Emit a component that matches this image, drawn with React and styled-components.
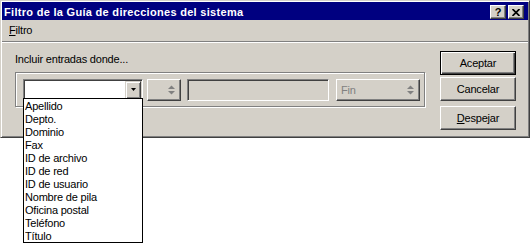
import React from "react";
import styled, { createGlobalStyle } from "styled-components";

const GlobalStyle = createGlobalStyle`
  html, body {
    margin: 0;
    padding: 0;
    background: #fff;
  }
  body {
    font-family: "Liberation Sans", Arial, sans-serif;
    font-size: 11px;
    letter-spacing: -0.2px;
    color: #000;
  }
  #root {
    min-height: 244px;
  }
`;

const FACE = "#d4d0c8";

const Window = styled.div`
  width: 530px;
  height: 138px;
  box-sizing: border-box;
  background: ${FACE};
  border-top: 1px solid ${FACE};
  border-left: 1px solid ${FACE};
  border-right: 1px solid #404040;
  border-bottom: 1px solid #404040;
  box-shadow: inset 1px 1px #fff, inset -1px -1px #808080;
  padding: 1px;
  display: flex;
  flex-direction: column;
`;

const TitleBar = styled.div`
  height: 18px;
  background: #000080;
  display: flex;
  align-items: center;
  padding: 0 4px 0 2px;
`;

const TitleText = styled.div`
  flex: 1;
  color: #fff;
  font-weight: bold;
  letter-spacing: 0.3px;
  line-height: 18px;
  padding-top: 2px;
  white-space: nowrap;
`;

const raised = `
  border-top: 1px solid #fff;
  border-left: 1px solid #fff;
  border-right: 1px solid #404040;
  border-bottom: 1px solid #404040;
  box-shadow: inset -1px -1px #808080;
  background: ${FACE};
`;

const sunken = `
  border-top: 1px solid #808080;
  border-left: 1px solid #808080;
  border-right: 1px solid #fff;
  border-bottom: 1px solid #fff;
  box-shadow: inset 1px 1px #404040, inset -1px -1px ${FACE};
`;

const CaptionButton = styled.div`
  ${raised}
  box-sizing: border-box;
  width: 16px;
  height: 14px;
  margin-top: 2px;
  margin-left: ${(p) => (p.$first ? 0 : 2)}px;
  display: flex;
  align-items: center;
  justify-content: center;
  font-weight: bold;
  font-size: 11px;
  line-height: 12px;
  letter-spacing: 0;
`;

const MenuBar = styled.div`
  height: 21px;
  line-height: 21px;
  padding-left: 7px;
`;

const Separator = styled.div`
  border-top: 1px solid #808080;
  border-bottom: 1px solid #fff;
`;

const Content = styled.div`
  display: flex;
  padding: 8px 0 0 13px;
`;

const LeftPanel = styled.div`
  width: 411px;
  display: flex;
  flex-direction: column;
`;

const Label = styled.div`
  margin-top: 2px;
  line-height: 13px;
`;

const GroupBox = styled.div`
  margin-top: 6px;
  width: 410px;
  height: 35px;
  box-sizing: border-box;
  border: 1px solid #808080;
  box-shadow: inset 1px 1px #fff, 1px 1px #fff;
  padding: 6px 0 0 7px;
  display: flex;
  align-items: flex-start;
`;

const Combo = styled.div`
  position: relative;
  ${sunken}
  box-sizing: border-box;
  width: 120px;
  height: 22px;
  background: #fff;
  margin-right: 4px;
  display: flex;
  justify-content: flex-end;
  padding: 1px;
`;

const DropButton = styled.div`
  box-sizing: border-box;
  width: 16px;
  height: 18px;
  border-top: 1px solid ${FACE};
  border-left: 1px solid ${FACE};
  border-right: 1px solid #404040;
  border-bottom: 1px solid #404040;
  box-shadow: inset 1px 1px #fff, inset -1px -1px #808080;
  background: ${FACE};
  display: flex;
  align-items: center;
  justify-content: center;
`;

const SpinBox = styled.div`
  ${raised}
  box-sizing: border-box;
  width: ${(p) => p.$w}px;
  height: 22px;
  margin-right: ${(p) => p.$mr || 0}px;
  display: flex;
  align-items: center;
  justify-content: space-between;
  padding: 0 5px 0 4px;
  color: #808080;
`;

const TextField = styled.div`
  ${sunken}
  box-sizing: border-box;
  width: 142px;
  height: 22px;
  background: ${FACE};
  margin-right: 7px;
`;

const DropList = styled.div`
  position: absolute;
  top: 18px;
  left: -1px;
  width: 120px;
  box-sizing: border-box;
  border: 1px solid #000;
  background: #fff;
  z-index: 5;
`;

const ListItem = styled.div`
  height: 13px;
  line-height: 13px;
  padding: 1px 0 0 1px;
  margin-bottom: -1px;
  white-space: nowrap;
`;

const ButtonColumn = styled.div`
  margin-left: 14px;
  display: flex;
  flex-direction: column;
`;

const PushButton = styled.div`
  box-sizing: border-box;
  width: 76px;
  height: 24px;
  margin-bottom: ${(p) => p.$after || 0}px;
  display: flex;
  align-items: center;
  justify-content: center;
  background: ${FACE};
  ${(p) =>
    p.$default
      ? `border: 1px solid #000;
         box-shadow: inset 1px 1px #fff, inset -1px -1px #404040, inset -2px -2px #808080;`
      : raised}
`;

const ARROW_GRAY = "#808080";

function UpDownArrows() {
  return (
    <svg width="7" height="10" viewBox="0 0 7 10">
      <polygon points="0,4 7,4 3.5,0.5" fill={ARROW_GRAY} />
      <polygon points="0,6 7,6 3.5,9.5" fill={ARROW_GRAY} />
    </svg>
  );
}

function DownArrow() {
  return (
    <svg width="7" height="4" viewBox="0 0 7 4">
      <polygon points="1,0 6,0 3.5,3" fill="#000" />
    </svg>
  );
}

function CloseGlyph() {
  return (
    <svg width="8" height="7" viewBox="0 0 8 7">
      <path d="M0.5 0 L7.5 7 M7.5 0 L0.5 7" stroke="#000" strokeWidth="1.7" />
    </svg>
  );
}

const fields = [
  "Apellido",
  "Depto.",
  "Dominio",
  "Fax",
  "ID de archivo",
  "ID de red",
  "ID de usuario",
  "Nombre de pila",
  "Oficina postal",
  "Teléfono",
  "Título",
];

export default function App() {
  return (
    <>
      <GlobalStyle />
      <Window>
        <TitleBar>
          <TitleText>Filtro de la Guía de direcciones del sistema</TitleText>
          <CaptionButton $first>?</CaptionButton>
          <CaptionButton>
            <CloseGlyph />
          </CaptionButton>
        </TitleBar>
        <MenuBar>
          <u>F</u>iltro
        </MenuBar>
        <Separator />
        <Content>
          <LeftPanel>
            <Label>Incluir entradas donde...</Label>
            <GroupBox>
              <Combo>
                <DropButton>
                  <DownArrow />
                </DropButton>
                <DropList>
                  {fields.map((f) => (
                    <ListItem key={f}>{f}</ListItem>
                  ))}
                </DropList>
              </Combo>
              <SpinBox $w={34} $mr={6}>
                <span />
                <UpDownArrows />
              </SpinBox>
              <TextField />
              <SpinBox $w={84}>
                <span>Fin</span>
                <UpDownArrows />
              </SpinBox>
            </GroupBox>
          </LeftPanel>
          <ButtonColumn>
            <PushButton $default $after={2}>Aceptar</PushButton>
            <PushButton $after={5}>Cancelar</PushButton>
            <PushButton>
              <u>D</u>espejar
            </PushButton>
          </ButtonColumn>
        </Content>
      </Window>
    </>
  );
}
